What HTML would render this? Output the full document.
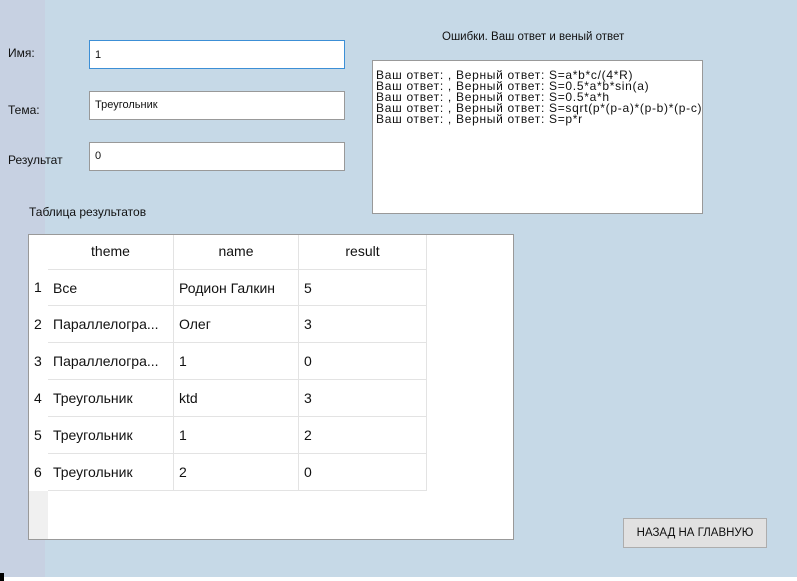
<!DOCTYPE html><html><head><meta charset="utf-8"><style>
body{margin:0;width:797px;height:581px;background:#c6d9e7;position:relative;overflow:hidden;font-family:"Liberation Sans","Noto Sans CJK SC",sans-serif;color:#111}
.strip{position:absolute;left:0;top:0;width:45px;height:581px;background:#c7d1e2}
.l{position:absolute;font-size:12px}
.in{position:absolute;left:89px;width:256px;height:29px;background:#fff;border:1px solid #999;box-sizing:border-box;font-size:11px;padding:7px 0 0 5px}
.ta{position:absolute;left:372px;top:60px;width:331px;height:154px;background:#fff;border:1px solid #999;box-sizing:border-box;font-size:12px;letter-spacing:0.7px;line-height:11px;padding:9px 0 0 3px;white-space:pre;overflow:hidden}
.tbl{position:absolute;left:28px;top:234px;width:486px;height:306px;background:#fff;border:1px solid #999;box-sizing:border-box}
.rh{position:absolute;left:0;top:256px;width:19px;height:48px;background:#f0f0f0}
.c{position:absolute;font-size:14px;height:37px;line-height:37px;box-sizing:border-box;border-right:1px solid #e3e3e3;border-bottom:1px solid #e3e3e3;padding-left:5px}
.n{position:absolute;left:5px;font-size:14px;line-height:37px}
.btn{position:absolute;left:623px;top:518px;width:144px;height:30px;background:#e1e1e1;border:1px solid #adadad;box-sizing:border-box;font-size:11.5px;text-align:center;line-height:28px}
</style></head><body>
<div class="strip"></div>
<div class="l" style="left:8px;top:46px">Имя:</div>
<div class="l" style="left:8px;top:103px">Тема:</div>
<div class="l" style="left:8px;top:153px">Результат</div>
<div class="in" style="top:40px;border-color:#3c8fd6;padding-top:8px">1</div>
<div class="in" style="top:91px">Треугольник</div>
<div class="in" style="top:142px">0</div>
<div class="l" style="left:442px;top:31px;font-size:11.5px">Ошибки. Ваш ответ и веный ответ</div>
<div class="ta">Ваш ответ: , Верный ответ: S=a*b*c/(4*R)
Ваш ответ: , Верный ответ: S=0.5*a*b*sin(a)
Ваш ответ: , Верный ответ: S=0.5*a*h
Ваш ответ: , Верный ответ: S=sqrt(p*(p-a)*(p-b)*(p-c))
Ваш ответ: , Верный ответ: S=p*r</div>
<div class="l" style="left:29px;top:205px">Таблица результатов</div>
<div class="tbl">
<div class="rh"></div>
<div class="c" style="left:19px;top:0;height:34px;width:126px;text-align:center;padding:0;line-height:32px;border-bottom:none">theme</div>
<div class="c" style="left:145px;top:0;height:34px;width:125px;text-align:center;padding:0;line-height:32px;border-bottom:none">name</div>
<div class="c" style="left:270px;top:0;height:34px;width:128px;text-align:center;padding:0;line-height:32px;border-bottom:none">result</div>
<div class="n" style="top:34px">1</div><div class="c" style="left:19px;top:34px;width:126px;border-top:1px solid #e3e3e3">Все</div><div class="c" style="left:145px;top:34px;width:125px;border-top:1px solid #e3e3e3">Родион Галкин</div><div class="c" style="left:270px;top:34px;width:128px;border-top:1px solid #e3e3e3">5</div>
<div class="n" style="top:71px">2</div><div class="c" style="left:19px;top:71px;width:126px">Параллелогра...</div><div class="c" style="left:145px;top:71px;width:125px">Олег</div><div class="c" style="left:270px;top:71px;width:128px">3</div>
<div class="n" style="top:108px">3</div><div class="c" style="left:19px;top:108px;width:126px">Параллелогра...</div><div class="c" style="left:145px;top:108px;width:125px">1</div><div class="c" style="left:270px;top:108px;width:128px">0</div>
<div class="n" style="top:145px">4</div><div class="c" style="left:19px;top:145px;width:126px">Треугольник</div><div class="c" style="left:145px;top:145px;width:125px">ktd</div><div class="c" style="left:270px;top:145px;width:128px">3</div>
<div class="n" style="top:182px">5</div><div class="c" style="left:19px;top:182px;width:126px">Треугольник</div><div class="c" style="left:145px;top:182px;width:125px">1</div><div class="c" style="left:270px;top:182px;width:128px">2</div>
<div class="n" style="top:219px">6</div><div class="c" style="left:19px;top:219px;width:126px">Треугольник</div><div class="c" style="left:145px;top:219px;width:125px">2</div><div class="c" style="left:270px;top:219px;width:128px">0</div>
</div>
<div class="btn">НАЗАД НА ГЛАВНУЮ</div>
<div style="position:absolute;left:0;top:577px;width:797px;height:4px;background:#fff"></div>
<div style="position:absolute;left:0;top:573px;width:4px;height:8px;background:#000"></div>
</body></html>
